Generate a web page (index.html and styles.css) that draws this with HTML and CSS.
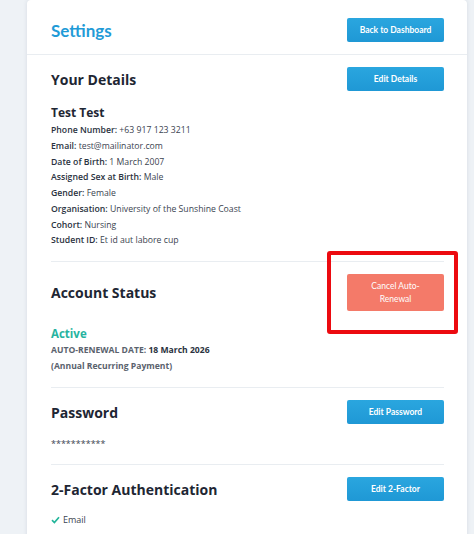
FILE: index.html
```html
<!doctype html>
<html>
<head>
    <meta charset="utf-8">
    <title>Settings</title>
    <link rel="stylesheet" href="styles.css">
</head>
<body>
<div class="card">
    <div class="card-head">
        <h1 class="page-title">Settings</h1>
        <a href="#" class="btn">Back to Dashboard</a>
    </div>
    <div class="card-body">
        <div class="section">
            <div class="section-row">
                <h2>Your Details</h2>
                <a href="#" class="btn">Edit Details</a>
            </div>
            <div class="name">Test Test</div>
            <ul class="details">
                <li><b>Phone Number:</b> +63 917 123 3211</li>
                <li><b>Email:</b> test@mailinator.com</li>
                <li><b>Date of Birth:</b> 1 March 2007</li>
                <li><b>Assigned Sex at Birth:</b> Male</li>
                <li><b>Gender:</b> Female</li>
                <li><b>Organisation:</b> University of the Sunshine Coast</li>
                <li><b>Cohort:</b> Nursing</li>
                <li><b>Student ID:</b> Et id aut labore cup</li>
            </ul>
        </div>
        <div class="section section-status">
            <div class="section-row">
                <h2>Account Status</h2>
                <a href="#" class="btn btn-cancel">Cancel Auto-<br>Renewal</a>
            </div>
            <div class="highlight"></div>
            <div class="status">Active</div>
            <div class="renewal">AUTO-RENEWAL DATE: <span>18 March 2026</span></div>
            <div class="renewal">(Annual Recurring Payment)</div>
        </div>
        <div class="section">
            <div class="section-row">
                <h2>Password</h2>
                <a href="#" class="btn">Edit Password</a>
            </div>
            <div class="secret">***********</div>
        </div>
        <div class="section section-last">
            <div class="section-row">
                <h2>2-Factor Authentication</h2>
                <a href="#" class="btn">Edit 2-Factor</a>
            </div>
            <div class="factor">
                <svg width="9" height="8" viewBox="0 0 9 8"><path d="M1 4.2 L3.4 6.5 L8 1.2" fill="none" stroke="#22b59a" stroke-width="1.7"/></svg>
                Email
            </div>
        </div>
    </div>
</div>
</body>
</html>
```

FILE: styles.css
```css
body{margin:0; padding:0; background:#eef2f6; font-family:"Open Sans", sans-serif; color:#2f3744;}
h1,h2,ul{margin:0; padding:0;}
.card{width:440px; margin-left:27px; min-height:534px; background:#fff; border-radius:4px 4px 0 0; box-shadow:0 0 4px rgba(40,60,90,0.12);}
.card-head{display:flex; justify-content:space-between; align-items:center; padding:18px 23px 12px 24px; border-bottom:1px solid #e9edf1;}
.page-title{font-family:Lato, sans-serif; font-size:17px; font-weight:700; color:#1f9bd7; padding-top:1px;}
.btn{display:flex; align-items:center; justify-content:center; width:97px; height:24px; box-sizing:border-box; border-radius:2px; background:linear-gradient(#2aa6df,#1f98d5); color:#fff; font-family:Lato, sans-serif; font-weight:700; font-size:8.5px; text-decoration:none; text-align:center; line-height:12.5px;}
.btn-cancel{height:37px; background:#f47a69; font-weight:400; font-size:8.5px;}
.card-body{padding:0 23px 0 24px;}
.section{position:relative; padding:12px 0 12px; border-bottom:1px solid #e9edf1;}
.section-status{padding-bottom:13px;}
.section-last{border-bottom:none;}
.section-row{display:flex; justify-content:space-between; align-items:center;}
.section-row h2{font-size:14px; font-weight:700; color:#1e2633;}
.name{margin-top:14px; font-size:12px; font-weight:700; line-height:16px; color:#1e2633;}
.details{list-style:none; margin-top:2px; font-size:8.7px; line-height:15.75px; color:#3b4350;}
.details b{font-weight:600; color:#2a3240;}
.status{margin-top:15px; font-size:11.5px; font-weight:700; line-height:16px; color:#27b3a0;}
.renewal{font-size:8.6px; font-weight:700; line-height:16px; color:#5a626d;}
.renewal span{color:#2a3240;}
.secret{margin-top:12px; font-size:9px; line-height:16px; color:#3b4350;}
.factor{margin-top:11px; display:flex; align-items:center; gap:3px; font-size:9px; line-height:16px; color:#3b4350;}
.highlight{position:absolute; left:276px; top:-11px; width:131px; height:83px; box-sizing:border-box; border:4px solid #ec0a10; border-radius:3px;}
```
